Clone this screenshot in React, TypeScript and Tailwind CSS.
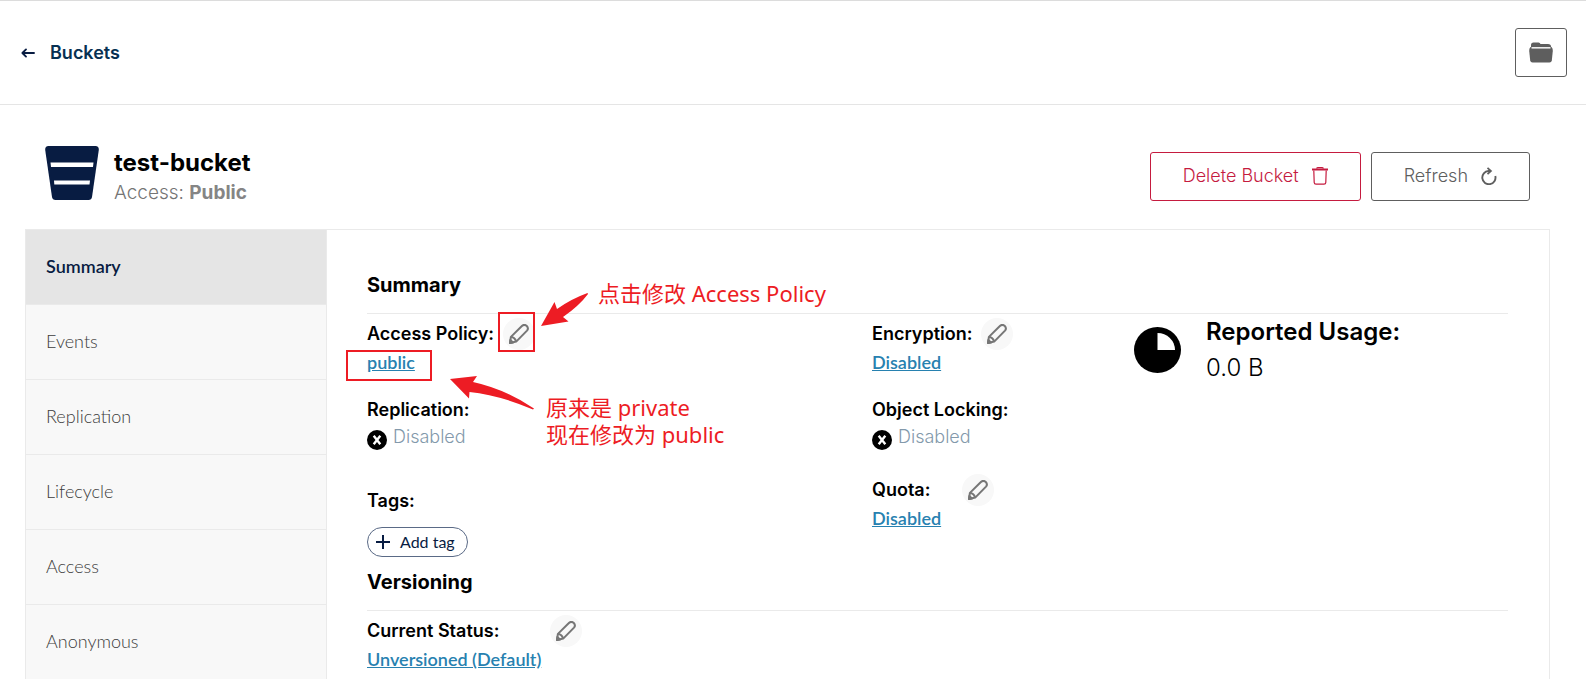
import type { ReactNode } from "react";
import clsx from "clsx";

const tabs = [
  "Summary",
  "Events",
  "Replication",
  "Lifecycle",
  "Access",
  "Anonymous",
];

const BackIcon = () => (
  <svg width="14" height="10" viewBox="0 0 14 10" fill="none">
    <path
      d="M13 5H2M5 1.4 1.4 5 5 8.6"
      stroke="#081c42"
      strokeWidth="1.9"
      strokeLinecap="round"
      strokeLinejoin="round"
    />
  </svg>
);

const FolderIcon = () => (
  <svg width="24" height="21" viewBox="0 0 24 21" fill="#5e5e5e">
    <path d="M2 5V3Q2 .5 4.500 .5H9.500Q11 .5 11.500 2H19Q22 2 22.200 5Z" />
    <path d="M1.500 5H22.500Q24 6.500 23.800 9L22.800 18.500Q22.500 20.500 20.500 20.500H3.500Q1.500 20.500 1.200 18.500L.2 9Q0 6.500 1.500 5Z" />
    <path d="M2.500 5H21.500V6.600H2.500Z" fill="#ececec" />
  </svg>
);

const BucketIcon = () => (
  <svg width="54" height="54" viewBox="0 0 54 54">
    <path
      d="M3.500 0H50.500Q54 0 53.800 4L47 51Q46.500 54 43.500 54H10.500Q7.500 54 7 51L.2 4Q0 0 3.500 0Z"
      fill="#081c42"
    />
    <path d="M5.500 16.500H48.500L48 21H6ZM9 34.500H45L44.500 38.500H9.300Z" fill="#fff" />
  </svg>
);

const TrashIcon = () => (
  <svg width="16" height="18" viewBox="0 0 16 18" fill="none" stroke="#c51b3f">
    <path d="M0 2.500H16" strokeWidth="2" />
    <path d="M4.500 1.500Q5 .6 6 .6H10Q11 .6 11.500 1.500" strokeWidth="1.2" />
    <path
      d="M1.800 3.500 2.200 15.500Q2.300 17.200 4 17.200H12Q13.700 17.200 13.800 15.500L14.200 3.500"
      strokeWidth="1.2"
    />
  </svg>
);

const RefreshIcon = () => (
  <svg width="16" height="18" viewBox="0 0 16 18" fill="none" stroke="#5e5e5e">
    <path d="M9.500 4H7.500A6.600 6.600 0 1 0 14.300 9" strokeWidth="1.9" />
    <path d="M6.500 .8 10 4 6.500 7.200" strokeWidth="1.7" />
  </svg>
);

const PencilIcon = () => (
  <svg
    width="20"
    height="20"
    viewBox="0 0 20 20"
    fill="none"
    stroke="#767676"
    strokeWidth="2"
    strokeLinejoin="round"
  >
    <path d="M1 19 1.900 12.900 12.900 2Q15.200 -.2 17.600 1.800 20 4.200 18 6.600L7.200 17.600Z" />
    <path d="M2 12.800Q5.800 13.500 7.200 17.600" />
    <path d="M1 19 1.300 16 4 18.500Z" fill="#767676" />
  </svg>
);

const DisabledIcon = () => (
  <svg width="20" height="20" viewBox="0 0 20 20">
    <circle cx="10" cy="10" r="10" />
    <path d="M6.700 5.800 13.300 14.200M13.300 5.800 6.700 14.200" stroke="#fff" strokeWidth="2.400" />
  </svg>
);

const UsageIcon = () => (
  <svg width="47" height="46" viewBox="0 0 47 46">
    <ellipse cx="23.500" cy="23" rx="23.500" ry="23" />
    <path d="M23.500 6A17.500 17 0 0 1 41 23H23.500Z" fill="#fff" />
  </svg>
);

const EditButton = ({ label }: { label: string }) => (
  <button
    aria-label={label}
    className="flex size-8 items-center justify-center rounded-full bg-[#f8f8f8]"
  >
    <PencilIcon />
  </button>
);

const Label = ({ children }: { children: ReactNode }) => (
  <span className="text-lg leading-8 font-semibold">{children}</span>
);

const ValueLink = ({ children }: { children: ReactNode }) => (
  <a
    href="#"
    className="block w-fit font-[Lato,sans-serif] text-lg leading-6 font-semibold text-[#2781b0] underline"
  >
    {children}
  </a>
);

const DisabledValue = () => (
  <div className="flex h-6 items-start gap-[6px] text-lg leading-[22px] font-light text-[#8399ab]">
    <span className="pt-1">
      <DisabledIcon />
    </span>
    Disabled
  </div>
);

const SectionTitle = ({ children }: { children: ReactNode }) => (
  <h2 className="border-b border-[#eaeaea] pb-[14px] text-xl leading-7 font-bold">
    {children}
  </h2>
);

const App = () => {
  return (
    <div className="flex min-h-screen flex-col bg-white font-[Inter,sans-serif] text-black">
      {/* Top bar */}
      <header className="flex items-center justify-between border-t border-b border-t-[#dcdcdc] border-b-[#e5e5e5] py-[27px] pr-[19px] pl-[21px]">
        <a
          href="#"
          className="flex items-center gap-[15px] text-lg font-semibold text-[#073052]"
        >
          <BackIcon />
          Buckets
        </a>
        <button
          aria-label="Object browser"
          className="flex h-[49px] w-[52px] items-center justify-center rounded-[3px] border border-[#5e5e5e]"
        >
          <FolderIcon />
        </button>
      </header>

      <main className="flex flex-1 flex-col pr-9 pl-[25px]">
        {/* Bucket header */}
        <div className="flex items-center justify-between px-5 pt-10 pb-[22px]">
          <div className="flex items-start gap-[15px]">
            <span className="pt-px">
              <BucketIcon />
            </span>
            <div className="pt-0.5">
              <h1 className="text-2xl leading-8 font-bold">test-bucket</h1>
              <p className="text-[19px] leading-7 font-light text-[#757575]">
                Access: <b className="font-bold text-[#858585]">Public</b>
              </p>
            </div>
          </div>
          <div className="flex gap-[10px]">
            <button className="flex h-[49px] items-center gap-[13px] rounded-[3px] border border-[#c51b3f] px-8 text-lg font-light text-[#c51b3f]">
              Delete Bucket
              <TrashIcon />
            </button>
            <button className="flex h-[49px] items-center gap-[13px] rounded-[3px] border border-[#5e5e5e] px-8 text-lg font-light text-[#5e5e5e]">
              Refresh
              <RefreshIcon />
            </button>
          </div>
        </div>

        <div className="flex flex-1 border-x border-t border-[#eaeaea]">
          {/* Tabs */}
          <nav className="w-[301px] shrink-0 border-r border-[#eaeaea] bg-[#f8f8f8] font-[Lato,sans-serif] text-lg">
            {tabs.map((tab, i) => (
              <a
                key={tab}
                href="#"
                className={clsx(
                  "flex h-[75px] items-center border-b border-[#eaeaea] px-5 pb-0.5 last:h-[74px] last:border-b-0",
                  i === 0
                    ? "bg-[#e5e5e5] font-semibold text-[#081c42]"
                    : "font-light text-[#3c3c3c]"
                )}
              >
                {tab}
              </a>
            ))}
          </nav>

          {/* Bucket details */}
          <section className="min-w-0 flex-1 pt-[41px] pr-[41px] pl-10">
            <SectionTitle>Summary</SectionTitle>
            <div className="grid grid-cols-[505fr_262fr_374fr]">
              <div className="relative">
                <div className="flex gap-[9px] pt-1">
                  <Label>Access Policy:</Label>
                  <EditButton label="Edit access policy" />
                </div>
                <ValueLink>public</ValueLink>

                <div className="pt-5">
                  <Label>Replication:</Label>
                  <DisabledValue />
                </div>

                <div className="pt-[35px]">
                  <Label>Tags:</Label>
                </div>
                <button className="mt-[10px] flex h-[30px] items-center gap-[10px] rounded-full border border-[#5a6a86] px-2 pr-3 font-[Lato,sans-serif] text-base text-[#081c42]">
                  <svg width="14" height="14" viewBox="0 0 14 14">
                    <path d="M7 0V14M0 7H14" stroke="#081c42" strokeWidth="2" />
                  </svg>
                  Add tag
                </button>

                {/* Annotations */}
                <div className="pointer-events-none absolute top-0 left-0 font-['Noto_Sans','Noto_Sans_CJK_SC',sans-serif] text-[22px] leading-[27px] whitespace-nowrap text-[#ed1c24]">
                  <div className="absolute -top-0.5 left-[131px] h-10 w-[37px] border-2 border-[#ed1c24]" />
                  <div className="absolute top-9 -left-[21px] h-[31px] w-[86px] border-2 border-[#ed1c24]" />
                  <svg
                    className="absolute -top-6 left-[170px]"
                    width="60"
                    height="40"
                    viewBox="0 0 60 40"
                    fill="#ed1c24"
                  >
                    <path d="M4 36 17.500 12 20 19Q34 9 50.500 3L51 4Q42 16 26 27L31.500 31.500Z" />
                  </svg>
                  <svg
                    className="absolute top-[60px] left-[80px]"
                    width="90"
                    height="40"
                    viewBox="0 0 90 40"
                    fill="#ed1c24"
                  >
                    <path d="M3 5 30 2 26 8Q58 15 87 34.500L86 35.500Q52 21 22.500 18L22 24.500Z" />
                  </svg>
                  <span className="absolute -top-[34px] left-[231px]">
                    点击修改 Access Policy
                  </span>
                  <span className="absolute top-20 left-[179px]">
                    原来是 private
                    <br />
                    现在修改为 public
                  </span>
                </div>
              </div>

              <div>
                <div className="flex gap-[9px] pt-1">
                  <Label>Encryption:</Label>
                  <EditButton label="Edit encryption" />
                </div>
                <ValueLink>Disabled</ValueLink>

                <div className="pt-5">
                  <Label>Object Locking:</Label>
                  <DisabledValue />
                </div>

                <div className="flex gap-8 pt-6">
                  <Label>Quota:</Label>
                  <EditButton label="Edit quota" />
                </div>
                <ValueLink>Disabled</ValueLink>
              </div>

              <div className="flex items-start gap-[25px]">
                <span className="pt-[13px]">
                  <UsageIcon />
                </span>
                <div className="text-2xl leading-9">
                  <div className="font-semibold">Reported Usage:</div>
                  <div className="font-light">0.0 B</div>
                </div>
              </div>
            </div>

            <div className="pt-[11px]">
              <SectionTitle>Versioning</SectionTitle>
            </div>
            <div className="flex gap-[51px] pt-1">
              <Label>Current Status:</Label>
              <EditButton label="Edit versioning" />
            </div>
            <ValueLink>Unversioned (Default)</ValueLink>
          </section>
        </div>
      </main>
    </div>
  );
};

export default App;
